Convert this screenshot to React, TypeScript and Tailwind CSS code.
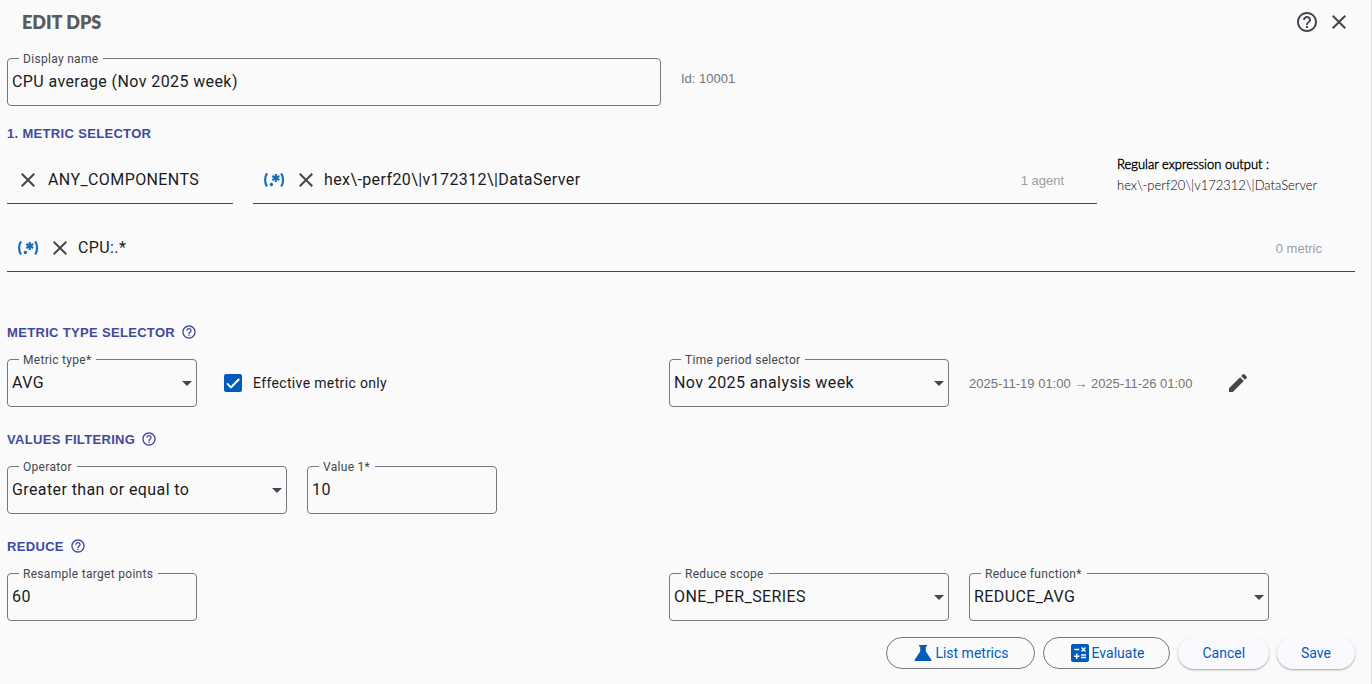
import { useId, useState } from "react";
import type { ReactNode } from "react";
import { MdCalculate, MdClose, MdEdit, MdHelpOutline } from "react-icons/md";

function RegexIcon() {
  return (
    <svg viewBox="0 0 24 24" className="size-6 shrink-0" fill="none" stroke="#1a6fb8" strokeWidth="2.200" aria-hidden="true">
      <path d="M5 5.300C2.500 9 2.500 14.800 5 18.500" />
      <path d="M19.200 5.300C21.700 9 21.700 14.800 19.200 18.500" />
      <path d="M13.800 6v8M10.300 8l7 4M10.300 12l7-4" />
      <circle cx="9.400" cy="16.500" r="1.700" fill="#1a6fb8" stroke="none" />
    </svg>
  );
}

function FlaskIcon() {
  return (
    <svg viewBox="0 0 24 24" className="size-6 shrink-0" fill="currentColor" aria-hidden="true">
      <path d="M8 4h8v1.600h-1.200v4.900l5.400 8c.4.800.2 1.500-.6 1.500H4.400c-.8 0-1-.7-.6-1.500l5.400-8V5.600H8z" />
    </svg>
  );
}

function OutlinedField({ label, id, className, children }: { label: string; id: string; className: string; children: ReactNode }) {
  return (
    <div className={`relative h-12 rounded border border-[#74777f] ${className}`}>
      <label htmlFor={id} className="absolute -top-2 left-[11px] bg-[#fafafa] pr-[5px] pl-1 text-xs leading-4 tracking-wide text-[#44474e]">
        {label}
      </label>
      {children}
    </div>
  );
}

function TextField({ label, value, className }: { label: string; value: string; className: string }) {
  const id = useId();
  return (
    <OutlinedField label={label} id={id} className={className}>
      <input id={id} defaultValue={value} className="h-11 w-full bg-transparent px-1 text-base tracking-wide text-[#1a1b1f] outline-none" />
    </OutlinedField>
  );
}

function SelectField({ label, options, className }: { label: string; options: string[]; className: string }) {
  const id = useId();
  return (
    <OutlinedField label={label} id={id} className={className}>
      <select id={id} className="h-[46px] w-full appearance-none bg-transparent pr-6 pl-1 text-base tracking-wide text-[#1a1b1f] outline-none">
        {options.map((o) => (
          <option key={o}>{o}</option>
        ))}
      </select>
      <svg viewBox="0 0 10 5" className="pointer-events-none absolute top-[21px] right-1 h-[5px] w-2.5" fill="#44474e" aria-hidden="true">
        <path d="M0 0h10L5 5z" />
      </svg>
    </OutlinedField>
  );
}

function ClearableInput({ name, value, regex, count, className }: { name: string; value: string; regex?: boolean; count?: string; className: string }) {
  const [text, setText] = useState(value);
  return (
    <div className={`flex h-12 items-center border-b border-[#44474e] pl-[9px] ${className}`}>
      {regex && (
        <button type="button" aria-label="Regular expression" className="mr-2">
          <RegexIcon />
        </button>
      )}
      <button type="button" aria-label={`Clear ${name}`} onClick={() => setText("")} className="text-[#44474e]">
        <MdClose className="size-6" />
      </button>
      <input
        aria-label={name}
        value={text}
        onChange={(e) => setText(e.target.value)}
        className={`min-w-0 flex-1 bg-transparent text-base tracking-wide text-[#1a1b1f] outline-none ${regex ? "pl-1.5" : "pl-2"}`}
      />
      {count && <span className="pt-0.5 pr-[33px] font-['Liberation_Sans',sans-serif] text-[13px] text-[#a0a0a0]">{count}</span>}
    </div>
  );
}

function Heading({ children, help, className }: { children: ReactNode; help?: boolean; className: string }) {
  return (
    <h2 className={`flex h-5 items-center gap-1.5 font-['Liberation_Sans',sans-serif] text-[13px] font-bold tracking-wide text-[#3f4a9c] ${className}`}>
      <span className="pt-0.5">{children}</span>
      {help && <MdHelpOutline className="size-4" />}
    </h2>
  );
}

export default function App() {
  const effectiveId = useId();
  return (
    <main className="min-h-screen border-r border-[#dcdcdc] bg-[#fafafa] pr-4 pb-[15px] pl-[7px] font-[Roboto,sans-serif]">
      <header className="flex h-11 items-center justify-between pr-1 pl-[15px]">
        <h1 className="font-[Lato,sans-serif] text-lg font-extrabold text-[#5a5a5a]">EDIT DPS</h1>
        <div className="flex gap-2 text-[#44474e]">
          <button type="button" aria-label="Help">
            <MdHelpOutline className="size-6" />
          </button>
          <button type="button" aria-label="Close">
            <MdClose className="size-6" />
          </button>
        </div>
      </header>

      <section className="mt-3.5 grid grid-cols-[662fr_686fr]">
        <TextField label="Display name" value="CPU average (Nov 2025 week)" className="mr-2" />
        <p className="pt-[11px] pl-3 font-['Liberation_Sans',sans-serif] text-[13px] text-[#757575]">Id: 10001</p>
      </section>

      <section>
        <Heading className="mt-[17px]">1. METRIC SELECTOR</Heading>
        <div className="mt-[13px] flex gap-5">
          <ClearableInput name="Component" value="ANY_COMPONENTS" className="w-[226px]" />
          <ClearableInput name="Agent" value={"hex\\-perf20\\|v172312\\|DataServer"} regex count="1 agent" className="flex-1" />
          <div className="-mt-0.5 w-[238px] font-['Lato_Light',Lato,sans-serif] text-[13px] leading-[21px]">
            <p className="font-bold text-black">Regular expression output :</p>
            <p className="font-light text-black">{"hex\\-perf20\\|v172312\\|DataServer"}</p>
          </div>
        </div>
        <ClearableInput name="Metric" value="CPU:.*" regex count="0 metric" className="mt-5" />
      </section>

      <section>
        <Heading help className="mt-[50px]">METRIC TYPE SELECTOR</Heading>
        <div className="mt-[17px] grid grid-cols-[662fr_686fr]">
          <div className="flex items-center">
            <SelectField label="Metric type*" options={["AVG", "MIN", "MAX"]} className="w-[190px]" />
            <span className="ml-[27px] grid size-[18px]">
              <input id={effectiveId} type="checkbox" defaultChecked className="peer col-start-1 row-start-1 size-[18px] appearance-none rounded-xs border-2 border-[#44474e] checked:border-[#005cbb] checked:bg-[#005cbb]" />
              <svg viewBox="0 0 18 18" className="pointer-events-none invisible col-start-1 row-start-1 size-[18px] peer-checked:visible" fill="none" stroke="#fff" strokeWidth="2" aria-hidden="true">
                <path d="M3 9.400l4 4L15.200 5" />
              </svg>
            </span>
            <label htmlFor={effectiveId} className="pl-[11px] text-sm tracking-wide text-[#1a1b1f]">
              Effective metric only
            </label>
          </div>
          <div className="flex items-center">
            <SelectField label="Time period selector" options={["Nov 2025 analysis week"]} className="w-[280px]" />
            <span className="pt-0.5 pl-5 font-['Liberation_Sans',sans-serif] text-[13px] text-[#757575]">2025-11-19 01:00 → 2025-11-26 01:00</span>
            <button type="button" aria-label="Edit time period" className="ml-[33px] text-[#44474e]">
              <MdEdit className="size-6" />
            </button>
          </div>
        </div>
      </section>

      <section>
        <Heading help className="mt-[22px]">VALUES FILTERING</Heading>
        <div className="mt-[17px] flex gap-5">
          <SelectField label="Operator" options={["Greater than or equal to", "Less than or equal to"]} className="w-[280px]" />
          <TextField label="Value 1*" value="10" className="w-[190px]" />
        </div>
      </section>

      <section>
        <Heading help className="mt-[22px]">REDUCE</Heading>
        <div className="mt-[17px] grid grid-cols-[662fr_686fr]">
          <TextField label="Resample target points" value="60" className="w-[190px]" />
          <div className="flex gap-5">
            <SelectField label="Reduce scope" options={["ONE_PER_SERIES"]} className="w-[280px]" />
            <SelectField label="Reduce function*" options={["REDUCE_AVG"]} className="w-[300px]" />
          </div>
        </div>
      </section>

      <footer className="mt-4 flex justify-end gap-2 text-sm text-[#005cbb]">
        <button type="button" className="flex h-8 items-center rounded-full border border-[#74777f] pr-[25px] pl-6">
          <FlaskIcon />
          List metrics
        </button>
        <button type="button" className="flex h-8 items-center rounded-full border border-[#74777f] pr-[25px] pl-6">
          <MdCalculate className="size-6" />
          Evaluate
        </button>
        <button type="button" className="h-8 rounded-full bg-[#faf9fd] px-6 shadow-[0_1px_2px_rgba(0,0,0,0.35)]">Cancel</button>
        <button type="button" className="h-8 rounded-full bg-[#faf9fd] px-6 shadow-[0_1px_2px_rgba(0,0,0,0.35)]">Save</button>
      </footer>
    </main>
  );
}
